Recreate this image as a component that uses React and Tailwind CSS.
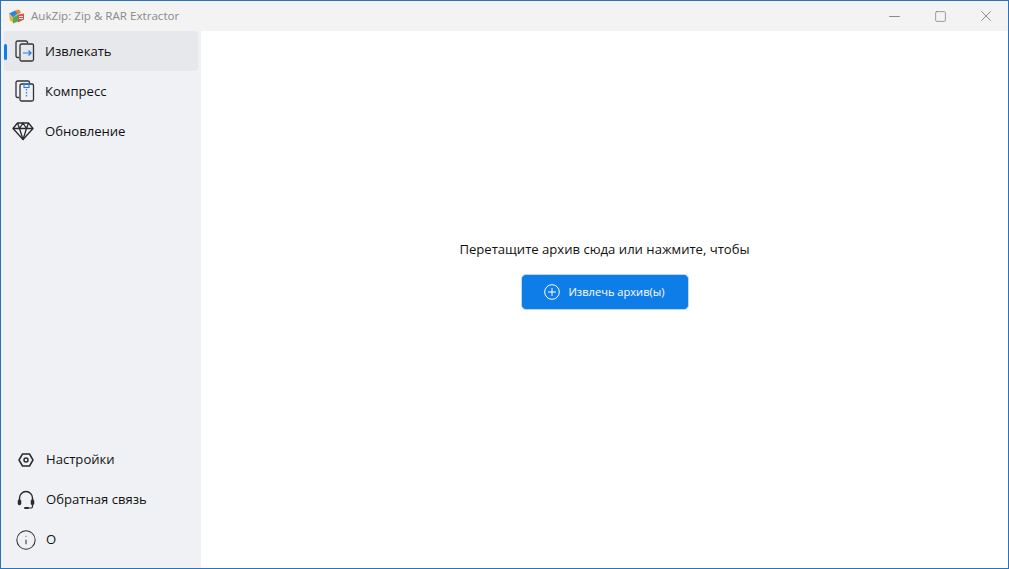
import { Info, Minus, Square, X } from "lucide-react";

const font = { fontFamily: '"Open Sans", "Noto Sans", sans-serif' };

function ExtractIcon() {
  return (
    <svg width="20" height="22" viewBox="0 0 20 22" fill="none">
      <path d="M4 17.500H2.500A1.500 1.500 0 0 1 1 16V2.500A1.500 1.500 0 0 1 2.500 1H11a1.500 1.500 0 0 1 1.500 1.500V3.500" stroke="#333" strokeWidth="1.300" />
      <rect x="5" y="4" width="13.500" height="17" rx="1.500" stroke="#333" strokeWidth="1.300" fill="#e6e8eb" />
      <path d="M8 13h8M13.500 10.500 16 13l-2.500 2.500" stroke="#1d7fe0" strokeWidth="1.200" />
    </svg>
  );
}

function CompressIcon() {
  return (
    <svg width="20" height="22" viewBox="0 0 20 22" fill="none">
      <path d="M4 17.500H2.500A1.500 1.500 0 0 1 1 16V2.500A1.500 1.500 0 0 1 2.500 1H13a1.500 1.500 0 0 1 1.500 1.500V3.500" stroke="#333" strokeWidth="1.300" />
      <rect x="5" y="4" width="13.500" height="17" rx="1.500" stroke="#333" strokeWidth="1.300" fill="#eff1f5" />
      <rect x="9" y="4" width="5" height="3.500" stroke="#1d7fe0" strokeWidth="1.100" />
      <path d="M11.500 9v1.500M11.500 12v1.500M11.500 15v1.500" stroke="#1d7fe0" strokeWidth="1.200" />
    </svg>
  );
}

function DiamondIcon() {
  return (
    <svg width="22" height="20" viewBox="0 0 22 20" fill="none" stroke="#2a2a2a" strokeWidth="1.300" strokeLinejoin="round">
      <path d="M5.500 2h11L21 7.500 11 18.500 1 7.500 5.500 2Z" />
      <path d="M1 7.500h20M5.500 2l2 5.500L11 18.500l3.500-11 2-5.500M7.500 7.500 11 2l3.500 5.500" />
    </svg>
  );
}

function SettingsIcon() {
  return (
    <svg width="16" height="14" viewBox="0 0 16 14" fill="none" stroke="#2a2a2a" strokeWidth="1.500">
      <path d="M4.500 1h7L15 7l-3.500 6h-7L1 7l3.500-6Z" strokeLinejoin="round" />
      <circle cx="8" cy="7" r="2" />
    </svg>
  );
}

function HeadsetIcon() {
  return (
    <svg width="18" height="20" viewBox="0 0 18 20" fill="none" stroke="#2a2a2a">
      <path d="M2.500 10V8a6.500 6.500 0 0 1 13 0v2" strokeWidth="1.400" />
      <rect x="1" y="9.500" width="3" height="5.500" rx="1.500" fill="#2a2a2a" strokeWidth="0.500" />
      <rect x="14" y="9.500" width="3" height="5.500" rx="1.500" fill="#2a2a2a" strokeWidth="0.500" />
      <path d="M15.500 15v1.500a1.500 1.500 0 0 1-1.500 1.500h-3" strokeWidth="1.200" />
      <path d="M8 18h3" strokeWidth="1.800" strokeLinecap="round" />
    </svg>
  );
}

function LogoIcon() {
  return (
    <svg width="18" height="15" viewBox="0 0 17 14">
      <path d="M1 4 7 1l3 3-5 4-4-4Z" fill="#2f86d8" />
      <path d="M7 1l4-1 2 3-3 2-3-4Z" fill="#e8873a" />
      <path d="M1 5l4 3v5L2 11 1 5Z" fill="#e8b23a" />
      <path d="M5 8l5-3v7l-5 2V8Z" fill="#58a84f" />
      <path d="M10 5l6-1v6l-6 3V5Z" fill="#d9574c" />
      <path d="M11 7h4M11 9h4" stroke="#f3e6d8" strokeWidth="1" />
    </svg>
  );
}

function NavItem({ icon, label, active, iconClass = "w-[26px] ml-[8px] mr-[1px]", textClass = "mt-[2px]" }) {
  return (
    <div className={`relative flex h-10 items-center rounded ${active ? "bg-[#e6e8eb]" : ""}`}>
      {active && <div className="absolute left-0 top-[13px] h-[16px] w-[3px] rounded-full bg-[#0f7de8]" />}
      <div className={`flex justify-center ${iconClass}`}>{icon}</div>
      <span className={`ml-[6px] text-[13.1px] text-[#111] ${textClass}`}>{label}</span>
    </div>
  );
}

export default function App() {
  return (
    <div className="flex h-[569px] w-[1009px] flex-col overflow-hidden border border-[#2a72bb] bg-white" style={font}>
      <div className="flex h-[30px] shrink-0 items-center bg-[#f3f3f3]">
        <div className="ml-[7px] mr-[1px] flex w-[17px] justify-center"><LogoIcon /></div>
        <span className="ml-[5px] text-[11.6px] text-[#8a8a8a]">AukZip: Zip &amp; RAR Extractor</span>
        <div className="ml-auto flex items-center text-[#777]">
          <div className="flex h-[30px] w-[45px] items-center justify-center"><Minus size={17} strokeWidth={1.200} /></div>
          <div className="flex h-[30px] w-[47px] items-center justify-center"><Square size={13} strokeWidth={1.300} /></div>
          <div className="flex h-[30px] w-[44px] items-center justify-center"><X size={18} strokeWidth={1.100} /></div>
        </div>
      </div>
      <div className="flex min-h-0 flex-1">
        <aside className="flex w-[200px] shrink-0 flex-col justify-between bg-[#eff1f5] pb-[8px] pl-[3px] pr-[3px]">
          <div>
            <NavItem active icon={<ExtractIcon />} label="Извлекать" />
            <NavItem icon={<CompressIcon />} label="Компресс" />
            <NavItem icon={<DiamondIcon />} label="Обновление" iconClass="w-[24px] ml-[7px] mr-[4px]" />
          </div>
          <div>
            <NavItem icon={<SettingsIcon />} label="Настройки" iconClass="w-[24px] ml-[10px] mr-[2px]" textClass="" />
            <NavItem icon={<HeadsetIcon />} label="Обратная связь" iconClass="w-[24px] ml-[10px] mr-[2px]" textClass="" />
            <NavItem icon={<Info size={22} strokeWidth={1.100} color="#2a2a2a" />} label="О" iconClass="w-[24px] ml-[10px] mr-[2px]" textClass="" />
          </div>
        </aside>
        <main className="flex flex-1 flex-col items-center pt-[208px]">
          <p className="text-[13.1px] leading-[20px] text-[#111]">Перетащите архив сюда или нажмите, чтобы</p>
          <button className="mt-[15px] flex h-[36px] w-[168px] items-center justify-center gap-2 rounded-[5px] border border-[#bcd6f0] bg-[#0f7de8] text-[11.1px] text-white">
            <svg width="16" height="16" viewBox="0 0 16 16" fill="none" stroke="white" strokeWidth="1">
              <circle cx="8" cy="8" r="7.300" />
              <path d="M8 4v8M4 8h8" />
            </svg>
            Извлечь архив(ы)
          </button>
        </main>
      </div>
    </div>
  );
}
